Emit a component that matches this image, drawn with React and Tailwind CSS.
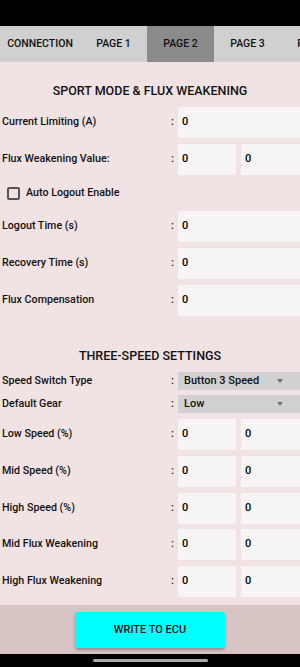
import React from 'react';

const font = { fontFamily: 'Roboto, "Liberation Sans", sans-serif' };

const tabs = ['CONNECTION', 'PAGE 1', 'PAGE 2', 'PAGE 3', 'PAGE 4'];

const Field = ({ value = '0', double = false }) => (
    <div className="flex flex-1 gap-[5px] min-w-0">
        <div className={`${double ? 'w-[58px] shrink-0' : 'w-[140px] shrink-0'} bg-[#f6f4f4] flex items-center pl-[4px] text-[11px] font-medium text-black`}>
            {value}
        </div>
        {double && (
            <div className="w-[70px] shrink-0 bg-[#f6f4f4] flex items-center pl-[4px] text-[11px] font-medium text-black">
                {value}
            </div>
        )}
    </div>
);

const Row = ({ label, double, className = '' }) => (
    <div className={`flex h-[31px] ${className}`}>
        <div className="w-[171px] shrink-0 pl-[2px] flex items-center text-[10.7px] font-medium text-[#111]">{label}</div>
        <div className="w-[7px] shrink-0 flex items-center text-[11px] font-medium text-[#111]">:</div>
        <Field double={double} />
    </div>
);

const Dropdown = ({ label, value, className = '' }) => (
    <div className={`flex h-[18px] ${className}`}>
        <div className="w-[171px] shrink-0 pl-[2px] flex items-center text-[10.7px] font-medium text-[#111]">{label}</div>
        <div className="w-[7px] shrink-0 flex items-center text-[11px] font-medium text-[#111]">:</div>
        <div className="w-[130px] shrink-0 bg-[#d1d1d1] flex items-center pl-[6px] text-[11px] font-medium text-[#111]">
            <span className="flex-1">{value}</span>
            <span className="w-0 h-0 border-l-[3.5px] border-r-[3.5px] border-t-[4px] border-l-transparent border-r-transparent border-t-[#6f6f6f] mr-[25px]" />
        </div>
    </div>
);

export default function App() {
    return (
        <div className="w-[300px] h-[667px] overflow-hidden flex flex-col bg-[#f1e3e3]" style={font}>
            <div className="h-[26px] bg-black shrink-0" />
            <div className="h-[36px] bg-[#d0d0d0] flex shrink-0 overflow-hidden">
                {tabs.map((t, i) => (
                    <div
                        key={t}
                        className={`${i === 0 ? 'w-[80px]' : 'w-[67px]'} shrink-0 flex items-center justify-center text-[10.5px] font-medium text-[#111] ${i === 2 ? 'bg-[#8b8b8b]' : ''}`}
                    >
                        {t}
                    </div>
                ))}
            </div>
            <div className="flex-1 overflow-hidden">
                <div className="mt-[21px] h-[16px] leading-[16px] text-center text-[12.5px] font-medium text-[#111]">SPORT MODE &amp; FLUX WEAKENING</div>
                <Row label="Current Limiting (A)" className="mt-[8px] h-[30px]" />
                <Row label="Flux Weakening Value:" double className="mt-[6px]" />
                <div className="h-[36px] flex items-center pl-[7px] gap-[6px]">
                    <div className="w-[13px] h-[13px] border-2 border-[#555] rounded-[2px]" />
                    <span className="text-[10.7px] font-medium text-[#111]">Auto Logout Enable</span>
                </div>
                <Row label="Logout Time (s)" />
                <Row label="Recovery Time (s)" className="mt-[6px] h-[30px]" />
                <Row label="Flux Compensation" className="mt-[6px] h-[30px]" />
                <div className="mt-[32px] h-[16px] leading-[16px] text-center text-[12.5px] font-medium text-[#111]">THREE-SPEED SETTINGS</div>
                <Dropdown label="Speed Switch Type" value="Button 3 Speed" className="mt-[8px]" />
                <Dropdown label="Default Gear" value="Low" className="mt-[5px]" />
                <Row label="Low Speed (%)" double className="mt-[6px]" />
                <Row label="Mid Speed (%)" double className="mt-[6px] h-[30px]" />
                <Row label="High Speed (%)" double className="mt-[6px]" />
                <Row label="Mid Flux Weakening" double className="mt-[5px]" />
                <Row label="High Flux Weakening" double className="mt-[6px] h-[30px]" />
            </div>
            <div className="h-[49px] shrink-0 bg-[#d9c4c4] flex justify-center pt-[7px]">
                <button className="w-[150px] h-[36px] bg-[#00ffff] rounded-[3px] shadow-[0_2px_3px_rgba(0,0,0,0.3)] text-[11px] font-medium text-[#111]">
                    WRITE TO ECU
                </button>
            </div>
            <div className="h-[13px] shrink-0 bg-black flex justify-center pt-[5px]">
                <div className="w-[115px] h-[3px] rounded-full bg-[#a8a8a8]" />
            </div>
        </div>
    );
}
